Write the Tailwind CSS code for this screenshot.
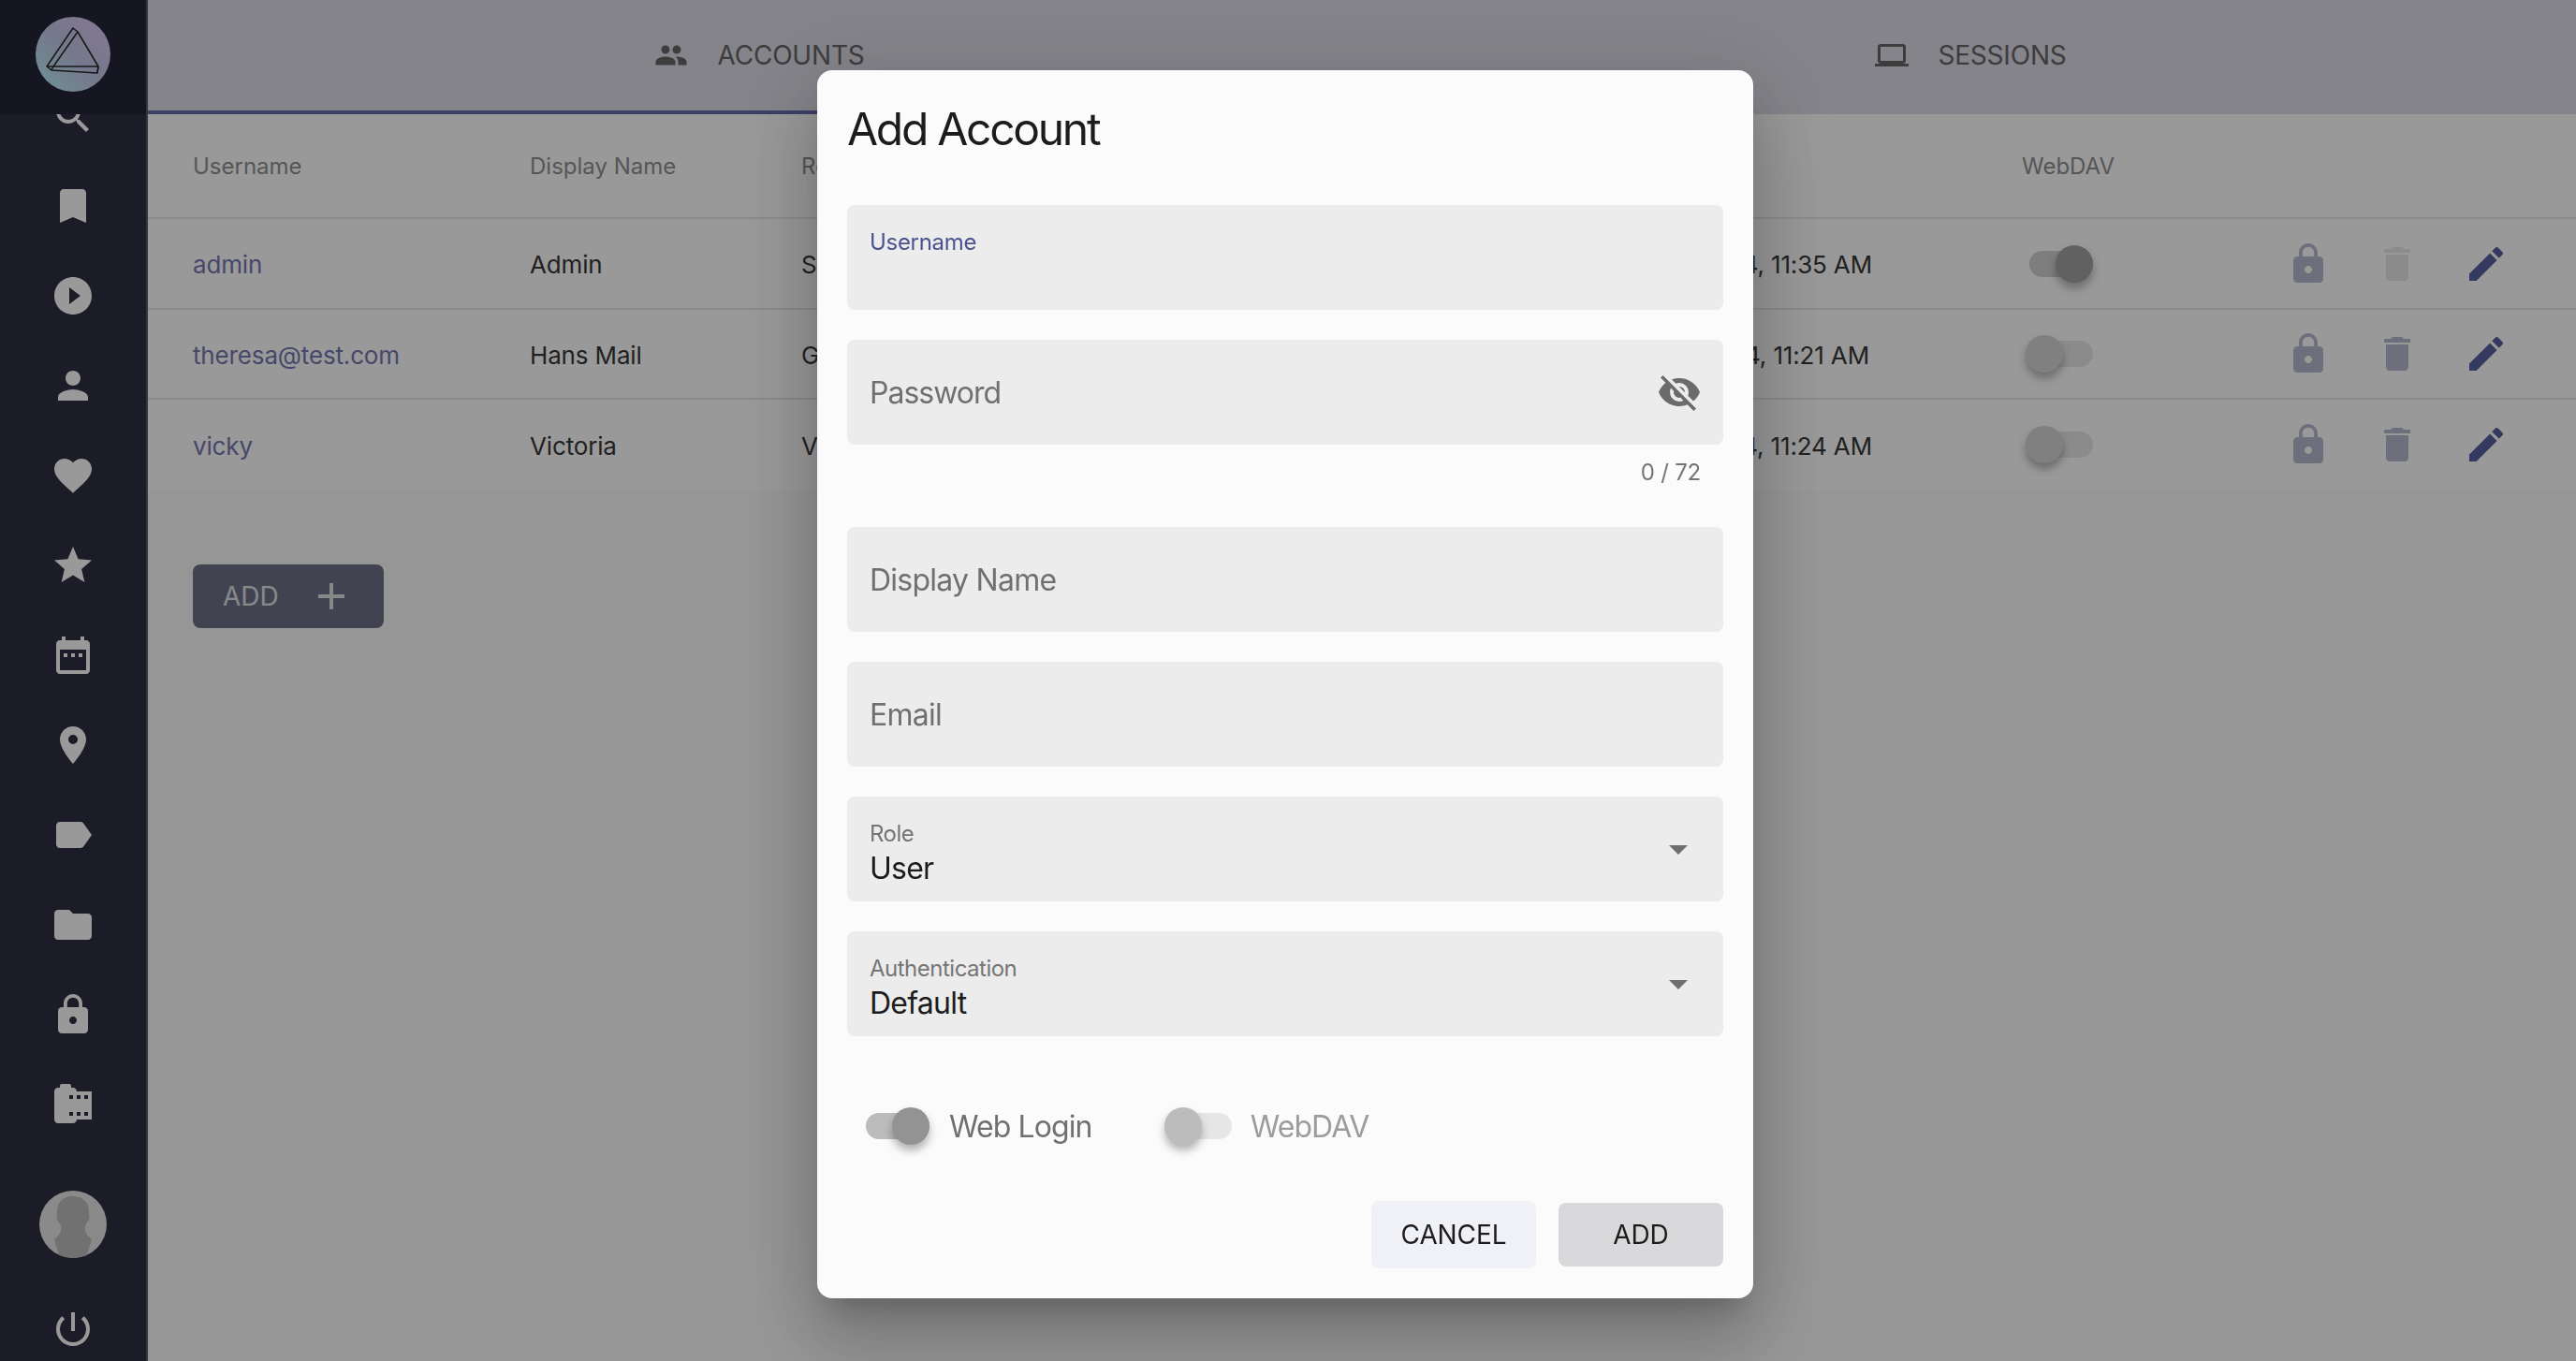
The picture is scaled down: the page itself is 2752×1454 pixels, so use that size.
<!DOCTYPE html>
<html lang="en">
<head>
<meta charset="utf-8">
<title>Accounts</title>
<script src="https://cdn.jsdelivr.net/npm/@tailwindcss/browser@4"></script>
</head>
<body class="h-screen overflow-hidden bg-[#fbfbfb] font-['Inter','Liberation_Sans',sans-serif]">
<div class="flex h-[1454px] w-[2752px]">

    <!-- sidebar -->
    <aside class="flex w-[158px] shrink-0 flex-col border-r-2 border-[#585869] bg-[#303045] text-white">
        <div class="relative z-[1] flex h-[122px] shrink-0 justify-center bg-[#25253a] pt-[18px]">
            <div class="h-[80px] w-[80px] rounded-full bg-linear-to-tr from-[#b5f5fa] via-[#c3c8e8] to-[#e0c8fb]">
                <svg viewBox="0 0 80 80" class="h-[80px] w-[80px]" fill="none" stroke="#2a2a2a" stroke-width="1.6" stroke-linejoin="round"><path d="M40 12 45 16 67 53 66 60 17 57 12 53Z"/><path d="M45 16 19 53H67M19 53 17 57M12 53H19M67 53 66 60"/></svg>
            </div>
        </div>
        <nav class="-mt-[46px] flex flex-col items-center">
            <a class="flex h-[96px] items-center"><svg viewBox="0 0 24 24" class="h-[48px] w-[48px] fill-current"><path d="M15.5 14h-.79l-.28-.27C15.41 12.59 16 11.11 16 9.5 16 5.91 13.09 3 9.5 3S3 5.91 3 9.5 5.91 16 9.5 16c1.61 0 3.09-.59 4.23-1.57l.27.28v.79l5 4.99L20.49 19l-4.99-5zm-6 0C7.01 14 5 11.99 5 9.5S7.01 5 9.5 5 14 7.01 14 9.5 11.99 14 9.5 14z"/></svg></a>
            <a class="flex h-[96px] items-center"><svg viewBox="0 0 24 24" class="h-[48px] w-[48px] fill-current"><path d="M17 3H7c-1.1 0-1.99.9-1.99 2L5 21l7-3 7 3V5c0-1.1-.9-2-2-2z"/></svg></a>
            <a class="flex h-[96px] items-center"><svg viewBox="0 0 24 24" class="h-[48px] w-[48px] fill-current"><path fill-rule="evenodd" d="M12 2C6.48 2 2 6.48 2 12s4.48 10 10 10 10-4.48 10-10S17.52 2 12 2zm-2 14.5v-9l6 4.5-6 4.5z"/></svg></a>
            <a class="flex h-[96px] items-center"><svg viewBox="0 0 24 24" class="h-[48px] w-[48px] fill-current"><path d="M12 12c2.21 0 4-1.79 4-4s-1.79-4-4-4-4 1.79-4 4 1.79 4 4 4zm0 2c-2.67 0-8 1.34-8 4v2h16v-2c0-2.66-5.33-4-8-4z"/></svg></a>
            <a class="flex h-[96px] items-center"><svg viewBox="0 0 24 24" class="h-[48px] w-[48px] fill-current"><path d="M12 21.35l-1.45-1.32C5.4 15.36 2 12.28 2 8.5 2 5.42 4.42 3 7.5 3c1.74 0 3.41.81 4.5 2.09C13.09 3.81 14.76 3 16.5 3 19.58 3 22 5.42 22 8.5c0 3.78-3.4 6.86-8.55 11.54L12 21.35z"/></svg></a>
            <a class="flex h-[96px] items-center"><svg viewBox="0 0 24 24" class="h-[48px] w-[48px] fill-current"><path d="M12 17.27L18.18 21l-1.64-7.03L22 9.24l-7.19-.61L12 2 9.19 8.63 2 9.24l5.46 4.73L5.82 21z"/></svg></a>
            <a class="flex h-[96px] items-center"><svg viewBox="0 0 24 24" class="h-[48px] w-[48px] fill-current"><path d="M19 4h-1V2h-2v2H8V2H6v2H5c-1.11 0-2 .9-2 2v14c0 1.1.89 2 2 2h14c1.1 0 2-.9 2-2V6c0-1.1-.9-2-2-2zm0 16H5V9h14v11zM7 11h2v2H7zm4 0h2v2h-2zm4 0h2v2h-2z"/></svg></a>
            <a class="flex h-[96px] items-center"><svg viewBox="0 0 24 24" class="h-[48px] w-[48px] fill-current"><path d="M12 2C8.13 2 5 5.13 5 9c0 5.25 7 13 7 13s7-7.75 7-13c0-3.87-3.13-7-7-7zm0 9.5a2.5 2.5 0 0 1 0-5 2.5 2.5 0 0 1 0 5z"/></svg></a>
            <a class="flex h-[96px] items-center"><svg viewBox="0 0 24 24" class="h-[48px] w-[48px] fill-current"><path d="M17.63 5.84C17.27 5.33 16.67 5 16 5L5 5.01C3.9 5.01 3 5.9 3 7v10c0 1.1.9 1.99 2 1.99L16 19c.67 0 1.27-.33 1.63-.84L22 12l-4.37-6.16z"/></svg></a>
            <a class="flex h-[96px] items-center"><svg viewBox="0 0 24 24" class="h-[48px] w-[48px] fill-current"><path d="M10 4H4c-1.1 0-1.99.9-1.99 2L2 18c0 1.1.9 2 2 2h16c1.1 0 2-.9 2-2V8c0-1.1-.9-2-2-2h-8l-2-2z"/></svg></a>
            <a class="flex h-[96px] items-center"><svg viewBox="0 0 24 24" class="h-[48px] w-[48px] fill-current"><path d="M18 8h-1V6c0-2.76-2.24-5-5-5S7 3.24 7 6v2H6c-1.1 0-2 .9-2 2v10c0 1.1.9 2 2 2h12c1.1 0 2-.9 2-2V10c0-1.1-.9-2-2-2zm-6 9c-1.1 0-2-.9-2-2s.9-2 2-2 2 .9 2 2-.9 2-2 2zm3.1-9H8.9V6c0-1.71 1.39-3.1 3.1-3.1 1.71 0 3.1 1.39 3.1 3.1v2z"/></svg></a>
            <a class="flex h-[96px] items-center"><svg viewBox="0 0 24 24" class="h-[48px] w-[48px] fill-current"><path d="M14 5c0-1.1-.9-2-2-2h-1V2c0-.55-.45-1-1-1H6c-.55 0-1 .45-1 1v1H4c-1.1 0-2 .9-2 2v15c0 1.1.9 2 2 2h8c1.1 0 2-.9 2-2h8V5h-8zm-2 13h-2v-2h2v2zm0-9h-2V7h2v2zm4 9h-2v-2h2v2zm0-9h-2V7h2v2zm4 9h-2v-2h2v2zm0-9h-2V7h2v2z"/></svg></a>
        </nav>
        <div class="mt-auto flex flex-col items-center pb-[10px]">
            <div class="h-[72px] w-[72px] overflow-hidden rounded-full bg-[#e6e6e6]">
                <svg viewBox="0 0 72 72" class="h-[72px] w-[72px] fill-[#bcbcbc]"><path d="M36 6c10 0 17 6 17 16 0 3 1 6 0 9-1 2-3 3-4 7-1 5 1 9 7 14l-6 20H22l-6-20c6-5 8-9 7-14-1-4-3-5-4-7-1-3 0-6 0-9C19 12 26 6 36 6Z"/></svg>
            </div>
            <a class="mt-[52px] flex h-[48px] items-center"><svg viewBox="0 0 24 24" class="h-[48px] w-[48px] fill-current"><path d="M13 3h-2v10h2V3zm4.83 2.17l-1.42 1.42C17.99 7.86 19 9.81 19 12c0 3.87-3.13 7-7 7s-7-3.13-7-7c0-2.19 1.01-4.14 2.58-5.42L6.17 5.17C4.23 6.82 3 9.26 3 12c0 4.97 4.03 9 9 9s9-4.03 9-9c0-2.74-1.23-5.18-3.17-6.83z"/></svg></a>
        </div>
    </aside>

    <main class="flex min-w-0 flex-1 flex-col">
        <!-- tabs -->
        <div class="grid h-[122px] shrink-0 grid-cols-2 bg-[#dcdce6] text-[28px] tracking-[-0.2px] text-[#666666]">
            <div class="flex items-center justify-center gap-[31px] border-b-4 border-[#646baa] pl-[10px]">
                <svg viewBox="0 0 24 24" class="h-[36px] w-[36px] fill-current"><path d="M16 11c1.66 0 2.99-1.34 2.99-3S17.66 5 16 5c-1.66 0-3 1.34-3 3s1.34 3 3 3zm-8 0c1.66 0 2.99-1.34 2.99-3S9.66 5 8 5C6.34 5 5 6.34 5 8s1.34 3 3 3zm0 2c-2.33 0-7 1.17-7 3.5V19h14v-2.5c0-2.33-4.67-3.5-7-3.5zm8 0c-.29 0-.62.02-.97.05 1.16.84 1.97 1.97 1.97 3.45V19h6v-2.5c0-2.33-4.67-3.5-7-3.5z"/></svg>
                <span>ACCOUNTS</span>
            </div>
            <div class="flex items-center justify-center gap-[31px] border-b-4 border-transparent pl-[4px]">
                <svg viewBox="0 0 24 24" class="h-[36px] w-[36px] fill-current"><path d="M20 18c1.1 0 1.99-.9 1.99-2L22 6c0-1.1-.9-2-2-2H4c-1.1 0-2 .9-2 2v10c0 1.1.9 2 2 2H0v2h24v-2h-4zM4 6h16v10H4V6z"/></svg>
                <span>SESSIONS</span>
            </div>
        </div>

        <!-- accounts table -->
        <div class="bg-[#ffffff] text-[26px] tracking-[-0.15px] text-[#383838]">
            <div class="grid h-[112px] grid-cols-[360px_290px_744px_560px_282px_1fr] items-center border-b-2 border-[#e8e8e8] pt-[2px] pl-[48px] text-[24px] tracking-normal text-[#8f8f8f]">
                <span>Username</span><span>Display Name</span><span>Role</span><span>Last Active</span><span>WebDAV</span><span></span>
            </div>
            <div class="grid h-[97px] grid-cols-[360px_290px_744px_560px_282px_1fr] items-center border-b-2 border-[#e8e8e8] pl-[48px]">
                <a class="pt-[2px] text-[#7577b0]">admin</a><span class="pt-[2px]">Admin</span><span class="pt-[2px]">Super Admin</span><span class="pt-[2px] pr-[160px] text-right">Jul 14, 2024, 11:35 AM</span>
                <div class="relative ml-[4px] h-[40px] w-[72px]">
                    <div class="absolute top-[6px] left-[4px] h-[28px] w-[68px] rounded-full bg-[#d2d2d2]"></div>
                    <div class="absolute top-0 left-[32px] h-[40px] w-[40px] rounded-full bg-[#a2a2a2] shadow-[0_6px_10px_rgba(0,0,0,0.3)]"></div>
                </div>
                <div class="flex gap-[47px]">
                    <svg viewBox="0 0 24 24" class="h-[48px] w-[48px] fill-[#b8bad0]"><path d="M18 8h-1V6c0-2.76-2.24-5-5-5S7 3.24 7 6v2H6c-1.1 0-2 .9-2 2v10c0 1.1.9 2 2 2h12c1.1 0 2-.9 2-2V10c0-1.1-.9-2-2-2zm-6 9c-1.1 0-2-.9-2-2s.9-2 2-2 2 .9 2 2-.9 2-2 2zm3.1-9H8.9V6c0-1.71 1.39-3.1 3.1-3.1 1.71 0 3.1 1.39 3.1 3.1v2z"/></svg>
                    <svg viewBox="0 0 24 24" class="h-[48px] w-[48px] fill-[#e8e8e8]"><path d="M6 19c0 1.1.9 2 2 2h8c1.1 0 2-.9 2-2V7H6v12zM19 4h-3.5l-1-1h-5l-1 1H5v2h14V4z"/></svg>
                    <svg viewBox="0 0 24 24" class="h-[48px] w-[48px] fill-[#585f9e]"><path d="M3 17.25V21h3.75L17.81 9.94l-3.75-3.75L3 17.25zM20.71 7.04c.39-.39.39-1.02 0-1.41l-2.34-2.34c-.39-.39-1.02-.39-1.41 0l-1.83 1.83 3.75 3.75 1.83-1.83z"/></svg>
                </div>
            </div>
            <div class="grid h-[96px] grid-cols-[360px_290px_744px_560px_282px_1fr] items-center border-b-2 border-[#e8e8e8] pl-[48px]">
                <a class="pt-[2px] text-[#7577b0]">theresa@test.com</a><span class="pt-[2px]">Hans Mail</span><span class="pt-[2px]">Guest</span><span class="pt-[2px] pr-[163px] text-right">Jul 14, 2024, 11:21 AM</span>
                <div class="relative ml-[4px] h-[40px] w-[72px]">
                    <div class="absolute top-[6px] left-[4px] h-[28px] w-[68px] rounded-full bg-[#e8e8e8]"></div>
                    <div class="absolute top-0 left-0 h-[40px] w-[40px] rounded-full bg-[#d5d5d5] shadow-[0_6px_10px_rgba(0,0,0,0.3)]"></div>
                </div>
                <div class="flex gap-[47px]">
                    <svg viewBox="0 0 24 24" class="h-[48px] w-[48px] fill-[#b8bad0]"><path d="M18 8h-1V6c0-2.76-2.24-5-5-5S7 3.24 7 6v2H6c-1.1 0-2 .9-2 2v10c0 1.1.9 2 2 2h12c1.1 0 2-.9 2-2V10c0-1.1-.9-2-2-2zm-6 9c-1.1 0-2-.9-2-2s.9-2 2-2 2 .9 2 2-.9 2-2 2zm3.1-9H8.9V6c0-1.71 1.39-3.1 3.1-3.1 1.71 0 3.1 1.39 3.1 3.1v2z"/></svg>
                    <svg viewBox="0 0 24 24" class="h-[48px] w-[48px] fill-[#b8bad0]"><path d="M6 19c0 1.1.9 2 2 2h8c1.1 0 2-.9 2-2V7H6v12zM19 4h-3.5l-1-1h-5l-1 1H5v2h14V4z"/></svg>
                    <svg viewBox="0 0 24 24" class="h-[48px] w-[48px] fill-[#585f9e]"><path d="M3 17.25V21h3.75L17.81 9.94l-3.75-3.75L3 17.25zM20.71 7.04c.39-.39.39-1.02 0-1.41l-2.34-2.34c-.39-.39-1.02-.39-1.41 0l-1.83 1.83 3.75 3.75 1.83-1.83z"/></svg>
                </div>
            </div>
            <div class="grid h-[96px] grid-cols-[360px_290px_744px_560px_282px_1fr] items-center pl-[48px]">
                <a class="pt-[2px] text-[#7577b0]">vicky</a><span class="pt-[2px]">Victoria</span><span class="pt-[2px]">Viewer</span><span class="pt-[2px] pr-[160px] text-right">Jul 14, 2024, 11:24 AM</span>
                <div class="relative ml-[4px] h-[40px] w-[72px]">
                    <div class="absolute top-[6px] left-[4px] h-[28px] w-[68px] rounded-full bg-[#e8e8e8]"></div>
                    <div class="absolute top-0 left-0 h-[40px] w-[40px] rounded-full bg-[#d5d5d5] shadow-[0_6px_10px_rgba(0,0,0,0.3)]"></div>
                </div>
                <div class="flex gap-[47px]">
                    <svg viewBox="0 0 24 24" class="h-[48px] w-[48px] fill-[#b8bad0]"><path d="M18 8h-1V6c0-2.76-2.24-5-5-5S7 3.24 7 6v2H6c-1.1 0-2 .9-2 2v10c0 1.1.9 2 2 2h12c1.1 0 2-.9 2-2V10c0-1.1-.9-2-2-2zm-6 9c-1.1 0-2-.9-2-2s.9-2 2-2 2 .9 2 2-.9 2-2 2zm3.1-9H8.9V6c0-1.71 1.39-3.1 3.1-3.1 1.71 0 3.1 1.39 3.1 3.1v2z"/></svg>
                    <svg viewBox="0 0 24 24" class="h-[48px] w-[48px] fill-[#b8bad0]"><path d="M6 19c0 1.1.9 2 2 2h8c1.1 0 2-.9 2-2V7H6v12zM19 4h-3.5l-1-1h-5l-1 1H5v2h14V4z"/></svg>
                    <svg viewBox="0 0 24 24" class="h-[48px] w-[48px] fill-[#585f9e]"><path d="M3 17.25V21h3.75L17.81 9.94l-3.75-3.75L3 17.25zM20.71 7.04c.39-.39.39-1.02 0-1.41l-2.34-2.34c-.39-.39-1.02-.39-1.41 0l-1.83 1.83 3.75 3.75 1.83-1.83z"/></svg>
                </div>
            </div>
        </div>

        <div class="pt-[80px] pl-[48px]">
            <button class="flex h-[68px] w-[204px] items-center gap-[32px] rounded-[8px] bg-[#6f7187] pl-[32px] text-[28px] text-[#ffffff]/80">
                <span>ADD</span>
                <svg viewBox="0 0 24 24" class="h-[48px] w-[48px] fill-current"><path d="M19 13h-6v6h-2v-6H5v-2h6V5h2v6h6v2z"/></svg>
            </button>
        </div>
    </main>
</div>

<!-- scrim -->
<div class="fixed inset-0 z-10 bg-black/40"></div>

<!-- add account dialog -->
<div class="fixed inset-0 z-20 flex items-center justify-center pt-[8px] pr-[6px]">
    <form class="flex h-[1312px] w-[1000px] flex-col rounded-[16px] bg-[#fbfbfb] px-[32px] shadow-[0_22px_30px_-14px_rgba(0,0,0,0.2),0_48px_76px_6px_rgba(0,0,0,0.14),0_18px_92px_16px_rgba(0,0,0,0.12)]">
        <h2 class="flex h-[144px] shrink-0 items-center pb-[18px] text-[48px] leading-none tracking-[-2.3px] text-[#1c1c1c]">Add Account</h2>

        <div class="flex h-[112px] shrink-0 flex-col rounded-[8px] bg-[#ececec] px-[24px] pt-[24px]">
            <label class="text-[24px] leading-[32px] tracking-[-0.3px] text-[#4a5390]">Username</label>
        </div>

        <div class="mt-[32px] flex h-[112px] shrink-0 items-center justify-between rounded-[8px] bg-[#ececec] pr-[23px] pl-[24px]">
            <label class="pt-[2px] text-[32px] tracking-[-1px] text-[#707070]">Password</label>
            <svg viewBox="0 0 24 24" class="h-[48px] w-[48px] fill-[#6b6b6b]"><path d="M11.83,9L15,12.16C15,12.11 15,12.05 15,12A3,3 0 0,0 12,9C11.94,9 11.89,9 11.83,9M7.53,9.8L9.08,11.35C9.03,11.56 9,11.77 9,12A3,3 0 0,0 12,15C12.22,15 12.44,14.97 12.65,14.92L14.2,16.47C13.53,16.8 12.79,17 12,17A5,5 0 0,1 7,12C7,11.21 7.2,10.47 7.53,9.8M2,4.27L4.28,6.55L4.73,7C3.08,8.3 1.78,10 1,12C2.73,16.39 7,19.5 12,19.5C13.55,19.5 15.03,19.2 16.4,18.65L16.83,19.08L19.73,22L21,20.73L3.27,3M12,7A5,5 0 0,1 17,12C17,12.64 16.87,13.26 16.64,13.82L19.57,16.75C21.07,15.5 22.27,13.86 23,12C21.27,7.61 17,4.5 12,4.5C10.6,4.5 9.26,4.75 8,5.2L10.17,7.35C10.74,7.13 11.35,7 12,7Z"/></svg>
        </div>
        <div class="flex h-[56px] shrink-0 items-center justify-end pt-[4px] pr-[24px] text-[24px] tracking-[-0.2px] text-[#757575]">0 / 72</div>

        <div class="mt-[32px] flex h-[112px] shrink-0 items-center rounded-[8px] bg-[#ececec] px-[24px] pt-[2px] text-[32px] tracking-[-0.75px] text-[#707070]">Display Name</div>
        <div class="mt-[32px] flex h-[112px] shrink-0 items-center rounded-[8px] bg-[#ececec] px-[24px] pt-[2px] text-[32px] tracking-[-0.75px] text-[#707070]">Email</div>

        <div class="mt-[32px] flex h-[112px] shrink-0 items-center justify-between rounded-[8px] bg-[#ececec] pr-[24px] pl-[24px]">
            <div class="flex flex-col pt-[12px]">
                <label class="text-[24px] leading-[30px] tracking-[-0.5px] text-[#757575]">Role</label>
                <span class="text-[32px] leading-[44px] tracking-[-0.75px] text-[#1c1c1c]">User</span>
            </div>
            <svg viewBox="0 0 24 24" class="h-[48px] w-[48px] fill-[#6f6f6f]"><path d="M7 10l5 5 5-5z"/></svg>
        </div>
        <div class="mt-[32px] flex h-[112px] shrink-0 items-center justify-between rounded-[8px] bg-[#ececec] pr-[24px] pl-[24px]">
            <div class="flex flex-col pt-[12px]">
                <label class="text-[24px] leading-[30px] tracking-[-0.5px] text-[#757575]">Authentication</label>
                <span class="text-[32px] leading-[44px] tracking-[-0.75px] text-[#1c1c1c]">Default</span>
            </div>
            <svg viewBox="0 0 24 24" class="h-[48px] w-[48px] fill-[#6f6f6f]"><path d="M7 10l5 5 5-5z"/></svg>
        </div>

        <div class="mt-[76px] flex h-[40px] shrink-0 items-center pl-[20px] text-[32px] tracking-[-0.9px]">
            <div class="relative h-[40px] w-[68px]">
                <div class="absolute top-[6px] left-0 h-[28px] w-[68px] rounded-full bg-[#bcbcbc]"></div>
                <div class="absolute top-0 left-[28px] h-[40px] w-[40px] rounded-full bg-[#939393] shadow-[0_6px_10px_rgba(0,0,0,0.3)]"></div>
            </div>
            <span class="ml-[21px] pt-[2px] text-[#707070]">Web Login</span>
            <div class="relative ml-[77px] h-[40px] w-[72px]">
                <div class="absolute top-[6px] left-0 h-[28px] w-[72px] rounded-full bg-[#e6e6e6]"></div>
                <div class="absolute top-0 left-0 h-[40px] w-[40px] rounded-full bg-[#bcbcbc] shadow-[0_6px_10px_rgba(0,0,0,0.3)]"></div>
            </div>
            <span class="ml-[20px] pt-[2px] text-[#9c9c9c]">WebDAV</span>
        </div>

        <div class="mt-[60px] flex items-center justify-end gap-[24px] text-[28px] tracking-[-0.1px] text-[#1c1c1c]">
            <button type="button" class="h-[72px] w-[176px] rounded-[8px] bg-[#f0f1f6]">CANCEL</button>
            <button type="button" class="h-[68px] w-[176px] rounded-[8px] bg-[#d9d9db]">ADD</button>
        </div>
    </form>
</div>
</body>
</html>
